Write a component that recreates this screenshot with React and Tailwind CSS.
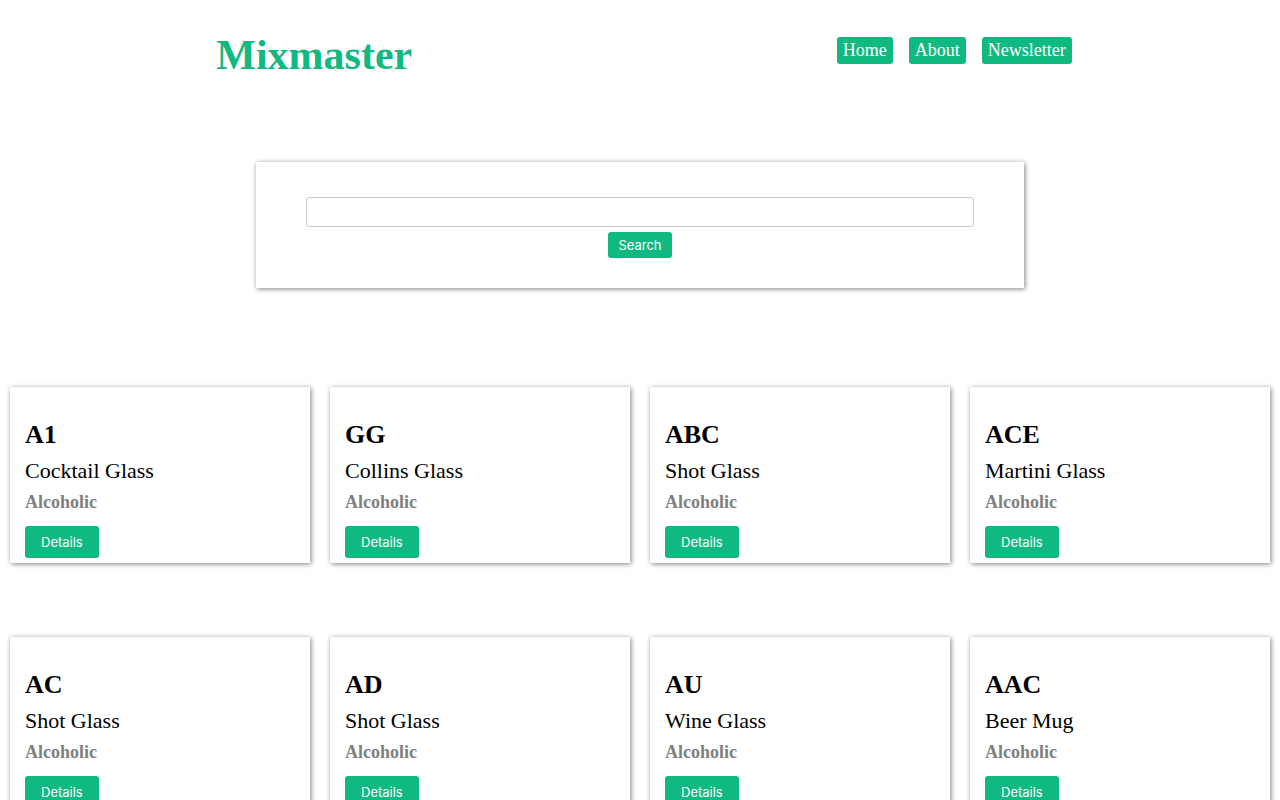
const drinks = [
  ["A1", "Cocktail Glass"],
  ["GG", "Collins Glass"],
  ["ABC", "Shot Glass"],
  ["ACE", "Martini Glass"],
  ["AC", "Shot Glass"],
  ["AD", "Shot Glass"],
  ["AU", "Wine Glass"],
  ["AAC", "Beer Mug"],
];

function Card({ name, glass }) {
  return (
    <article className="m-[10px] bg-white px-[15px] pt-8 pb-[5px] shadow-[1px_1px_5px_#808080]">
      <h2 className="text-[26px] leading-8 font-bold">{name}</h2>
      <p className="mt-1 text-[22px] leading-8">{glass}</p>
      <p className="text-[18px] leading-[30px] font-bold text-[#808080]">Alcoholic</p>
      <button
        type="button"
        className="mt-[9px] block h-8 rounded-[3px] bg-[#10b981] px-4 pt-px font-[Inter,sans-serif] text-[13px] text-white"
      >
        Details
      </button>
    </article>
  );
}

export default function App() {
  return (
    <div className="bg-white font-['Liberation_Serif','Times_New_Roman',serif] text-black">
      <header className="flex items-start justify-around pt-7">
        <h1 className="pl-2 text-[42px] leading-[54px] font-bold text-[#10b981]">Mixmaster</h1>
        <nav className="mt-[9px] flex gap-4 pl-2 text-[18px] leading-[27px] text-white">
          <a href="#home" className="rounded-[3px] bg-[#10b981] px-[6px]">Home</a>
          <a href="#about" className="rounded-[3px] bg-[#10b981] px-[6px]">About</a>
          <a href="#newsletter" className="rounded-[3px] bg-[#10b981] px-[6px]">Newsletter</a>
        </nav>
      </header>
      <main>
        <form
          className="mx-auto mt-20 flex w-3/5 flex-col items-center px-[50px] pt-[35px] pb-[30px] shadow-[1px_1px_5px_#808080]"
          onSubmit={(e) => e.preventDefault()}
        >
          <input
            type="text"
            aria-label="Search drinks"
            className="h-[30px] w-full rounded-[3px] border border-[#cfcacc] px-2 outline-none"
          />
          <button
            type="submit"
            className="mt-[5px] h-[26px] rounded-[3px] bg-[#10b981] px-[10px] pt-px font-[Inter,sans-serif] text-[13px] text-white"
          >
            Search
          </button>
        </form>
        <section className="mt-[89px] grid grid-cols-4 gap-y-[54px]">
          {drinks.map(([name, glass]) => (
            <Card key={name} name={name} glass={glass} />
          ))}
        </section>
      </main>
    </div>
  );
}
